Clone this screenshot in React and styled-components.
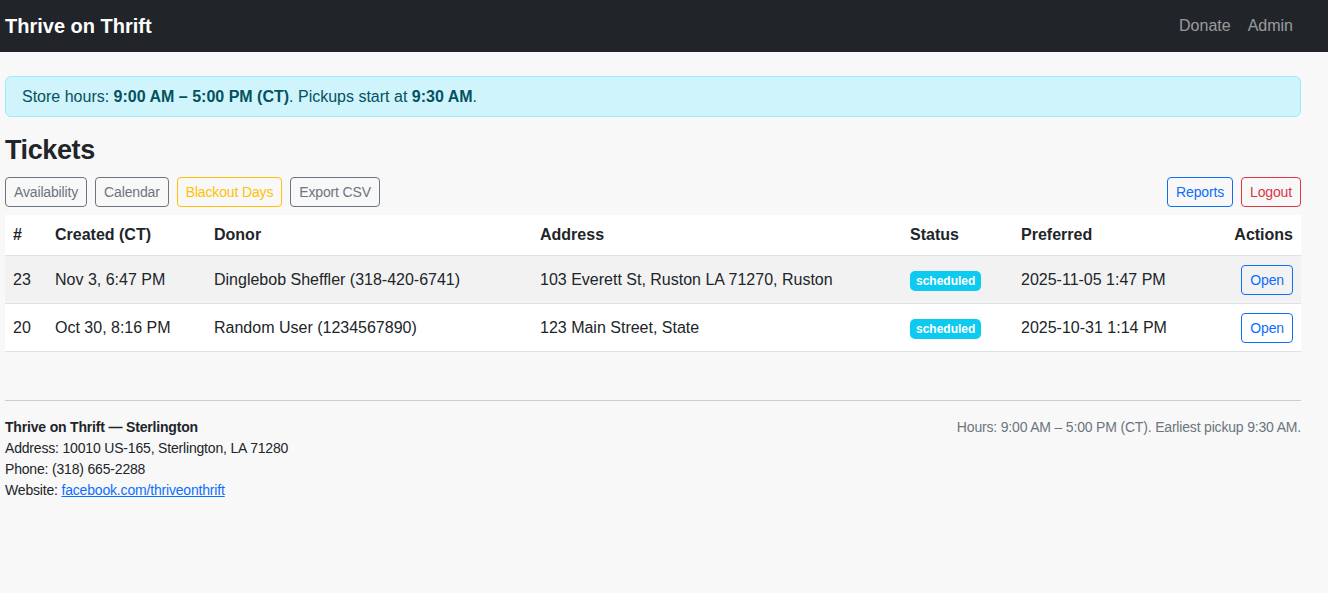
import styled, { createGlobalStyle } from "styled-components";

const GlobalStyle = createGlobalStyle`
  * { box-sizing: border-box; }
  body {
    margin: 0;
    background-color: #f8f8f8;
    color: #212529;
    font-family: "Liberation Sans", Arial, sans-serif;
    font-size: 16px;
    line-height: 1.5;
  }
`;

const Navbar = styled.nav`
  background-color: #212529;
  height: 52px;
  display: flex;
  align-items: center;
  justify-content: space-between;
  padding: 0 35px 0 5px;
`;
const Brand = styled.a`
  color: #fff;
  font-size: 20px;
  font-weight: 700;
  text-decoration: none;
`;
const NavLinks = styled.div`
  display: flex;
  gap: 17px;
`;
const NavLink = styled.a`
  color: rgba(255, 255, 255, 0.55);
  text-decoration: none;
  font-size: 16px;
`;

const Main = styled.main`
  padding: 24px 27px 0 5px;
`;
const Alert = styled.div`
  background-color: #cff4fc;
  border: 1px solid #9eeaf9;
  color: #055160;
  border-radius: 6px;
  padding: 8px 16px 7px;
  margin-bottom: 16px;
  b { font-weight: 700; }
`;
const Title = styled.h3`
  font-size: 27px;
  font-weight: 700;
  letter-spacing: -0.4px;
  line-height: 34px;
  margin: 0 0 10px 0;
`;
const Toolbar = styled.div`
  display: flex;
  justify-content: space-between;
  margin-bottom: 8px;
`;
const BtnGroup = styled.div`
  display: flex;
  gap: 8px;
`;
const Btn = styled.button`
  font-family: inherit;
  font-size: 14px;
  letter-spacing: -0.15px;
  line-height: 22px;
  padding: 3px 8px;
  border-radius: 4px;
  background: transparent;
  border: 1px solid ${(p) => p.color};
  color: ${(p) => p.color};
  cursor: pointer;
`;

const Table = styled.table`
  width: 100%;
  border-collapse: collapse;
  table-layout: fixed;
  background-color: #fff;
`;
const Th = styled.th`
  text-align: ${(p) => p.align || "left"};
  width: ${(p) => p.w || "auto"};
  font-weight: 700;
  padding: 8px;
  border-bottom: 1px solid #dee2e6;
  white-space: nowrap;
`;
const Row = styled.tr`
  background-color: ${(p) => (p.striped ? "#f2f2f2" : "#fff")};
`;
const Td = styled.td`
  text-align: ${(p) => p.align || "left"};
  padding: 8px;
  height: 48px;
  border-bottom: 1px solid #dee2e6;
  vertical-align: middle;
  white-space: nowrap;
`;
const Badge = styled.span`
  display: inline-block;
  background-color: #0dcaf0;
  color: #fff;
  font-size: 12px;
  font-weight: 700;
  line-height: 12px;
  padding: 4px 6px;
  border-radius: 5px;
`;

const Footer = styled.footer`
  margin-top: 48px;
  border-top: 1px solid #ccc;
  padding-top: 16px;
  font-size: 14px;
  letter-spacing: -0.18px;
  line-height: 21px;
  display: flex;
  justify-content: space-between;
  align-items: flex-start;
`;
const FooterInfo = styled.div`
  display: flex;
  flex-direction: column;
  b { font-weight: 700; }
  a { color: #0d6efd; }
`;
const FooterHours = styled.div`
  color: #6c757d;
`;

const tickets = [
  {
    id: 23,
    created: "Nov 3, 6:47 PM",
    donor: "Dinglebob Sheffler (318-420-6741)",
    address: "103 Everett St, Ruston LA 71270, Ruston",
    status: "scheduled",
    preferred: "2025-11-05 1:47 PM",
  },
  {
    id: 20,
    created: "Oct 30, 8:16 PM",
    donor: "Random User (1234567890)",
    address: "123 Main Street, State",
    status: "scheduled",
    preferred: "2025-10-31 1:14 PM",
  },
];

export default function App() {
  return (
    <>
      <GlobalStyle />
      <Navbar>
        <Brand href="#">Thrive on Thrift</Brand>
        <NavLinks>
          <NavLink href="#">Donate</NavLink>
          <NavLink href="#">Admin</NavLink>
        </NavLinks>
      </Navbar>
      <Main>
        <Alert>
          Store hours: <b>9:00 AM – 5:00 PM (CT)</b>. Pickups start at{" "}
          <b>9:30 AM</b>.
        </Alert>
        <Title>Tickets</Title>
        <Toolbar>
          <BtnGroup>
            <Btn color="#6c757d">Availability</Btn>
            <Btn color="#6c757d">Calendar</Btn>
            <Btn color="#ffc107">Blackout Days</Btn>
            <Btn color="#6c757d">Export CSV</Btn>
          </BtnGroup>
          <BtnGroup>
            <Btn color="#0d6efd">Reports</Btn>
            <Btn color="#dc3545">Logout</Btn>
          </BtnGroup>
        </Toolbar>
        <Table>
          <thead>
            <tr>
              <Th w="42px">#</Th>
              <Th w="159px">Created (CT)</Th>
              <Th w="326px">Donor</Th>
              <Th w="370px">Address</Th>
              <Th w="111px">Status</Th>
              <Th w="208px">Preferred</Th>
              <Th align="right">Actions</Th>
            </tr>
          </thead>
          <tbody>
            {tickets.map((t, i) => (
              <Row key={t.id} striped={i % 2 === 0}>
                <Td>{t.id}</Td>
                <Td>{t.created}</Td>
                <Td>{t.donor}</Td>
                <Td>{t.address}</Td>
                <Td>
                  <Badge>{t.status}</Badge>
                </Td>
                <Td>{t.preferred}</Td>
                <Td align="right">
                  <Btn color="#0d6efd">Open</Btn>
                </Td>
              </Row>
            ))}
          </tbody>
        </Table>
        <Footer>
          <FooterInfo>
            <b>Thrive on Thrift — Sterlington</b>
            <span>Address: 10010 US-165, Sterlington, LA 71280</span>
            <span>Phone: (318) 665-2288</span>
            <span>
              Website: <a href="#">facebook.com/thriveonthrift</a>
            </span>
          </FooterInfo>
          <FooterHours>
            Hours: 9:00 AM – 5:00 PM (CT). Earliest pickup 9:30 AM.
          </FooterHours>
        </Footer>
      </Main>
    </>
  );
}
